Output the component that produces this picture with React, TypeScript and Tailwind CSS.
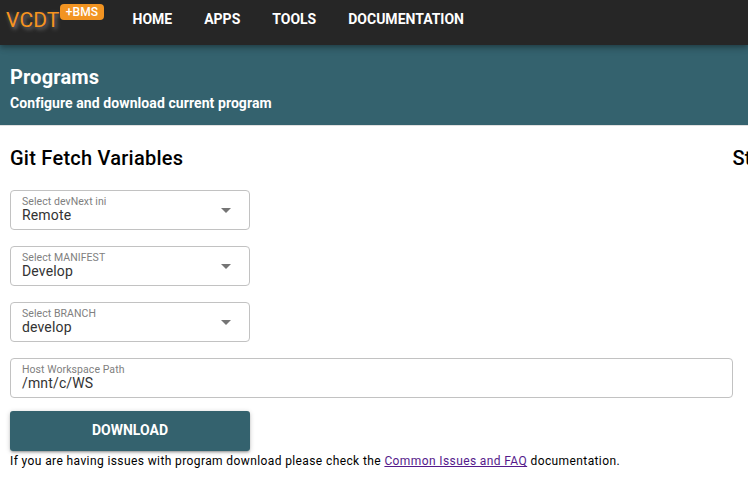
import React from "react";

const navItems = ["HOME", "APPS", "TOOLS", "DOCUMENTATION"];

const selects = [
  { label: "Select devNext ini", value: "Remote" },
  { label: "Select MANIFEST", value: "Develop" },
  { label: "Select BRANCH", value: "develop" },
];

function Field({ label, value, wide }: { label: string; value: string; wide?: boolean }) {
  return (
    <div
      className={`${wide ? "w-[723px]" : "w-60"} flex h-10 items-center justify-between rounded-[4px] border border-[#c2c2c2] pl-[11px] pr-[11px]`}
    >
      <div className="flex flex-col pb-[2px]">
        <span className="text-[10.5px] leading-[13px] tracking-[0.07px] text-[#808080]">{label}</span>
        <span className="text-[14px] leading-[15px] tracking-[0.15px] text-[#333333]">{value}</span>
      </div>
      {!wide && (
        <svg className="h-6 w-6 fill-[#757575]" viewBox="0 0 24 24">
          <path d="M7 10l5 5 5-5z" />
        </svg>
      )}
    </div>
  );
}

export default function App() {
  return (
    <div className="h-[478px] w-[748px] overflow-hidden bg-white font-[Roboto,sans-serif] text-black">
      <header className="relative flex h-[45px] items-start bg-[#262626] pl-[6px] shadow-[0_2px_4px_-1px_rgba(0,0,0,0.2),0_4px_5px_rgba(0,0,0,0.14),0_1px_10px_rgba(0,0,0,0.12)]">
        <div className="flex w-[126.5px] items-start">
          <span className="mt-[6px] w-[54px] text-[21px] leading-7 tracking-[0.15px] text-[#f7931e] [text-shadow:2px_2px_4px_#808080]">VCDT</span>
          <span className="mt-1 flex h-4 w-11 items-center justify-center rounded-[4px] bg-[#f29422] text-[12px] font-medium leading-3 tracking-[0.1px] text-white">
            +BMS
          </span>
        </div>
        <nav className="flex gap-8 pt-[9px] text-[14px] font-bold leading-5 text-white">
          {navItems.map((item) => (
            <a key={item}>{item}</a>
          ))}
        </nav>
      </header>
      <section className="h-20 bg-[#34626e] pl-[10px] pt-4 text-white">
        <h1 className="text-[20px] font-bold leading-8 tracking-[0.15px]">Programs</h1>
        <p className="text-[14px] font-bold leading-5 tracking-[0.08px]">Configure and download current program</p>
      </section>
      <main className="border-t border-[#e0e0e0] pl-[10px]">
        <div className="flex pt-4 text-[20px] font-medium leading-8 tracking-[0.25px]">
          <h2 className="w-[722.5px] shrink-0">Git Fetch Variables</h2>
          <h2>Status</h2>
        </div>
        <div className="mt-4 flex flex-col gap-4">
          {selects.map((s) => (
            <Field key={s.label} label={s.label} value={s.value} />
          ))}
          <Field label="Host Workspace Path" value="/mnt/c/WS" wide />
        </div>
        <button className="mt-[13px] block h-10 w-60 rounded-[3px] bg-[#34626e] pb-[2px] text-[14px] font-bold leading-6 text-white shadow-[0_1px_5px_rgba(0,0,0,0.2),0_2px_2px_rgba(0,0,0,0.14),0_3px_1px_-2px_rgba(0,0,0,0.12)]">
          DOWNLOAD
        </button>
        <p className="whitespace-nowrap text-[12px] leading-5 tracking-[0.393px]">
          If you are having issues with program download please check the{" "}
          <a className="text-[#551a8b] underline">Common Issues and FAQ</a> documentation.
        </p>
      </main>
    </div>
  );
}
